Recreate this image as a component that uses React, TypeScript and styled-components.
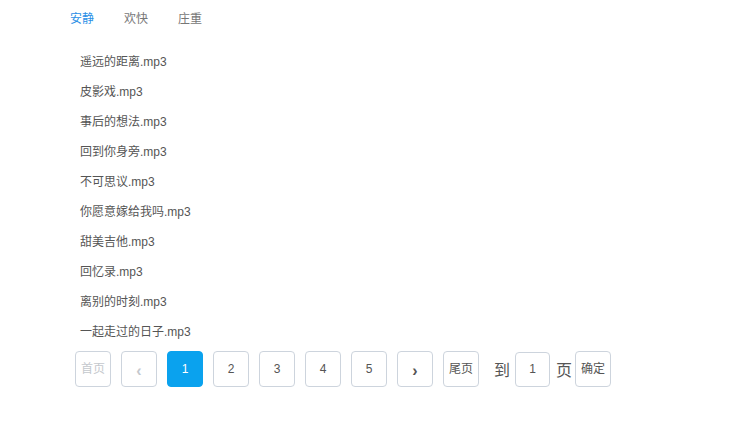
import React from "react";
import styled, { createGlobalStyle } from "styled-components";

const Global = createGlobalStyle`
  html, body { margin: 0; padding: 0; background: #fff; }
  body { font-family: "Liberation Sans", "Noto Sans CJK SC", sans-serif; }
`;

const Page = styled.div`
  width: 730px;
  height: 425px;
`;

const Tabs = styled.div`
  display: flex;
  height: 34px;
  align-items: center;
  padding-left: 70px;
  gap: 30px;
`;

const Tab = styled.span<{ $active?: boolean }>`
  font-size: 12px;
  color: ${(p) => (p.$active ? "#2b8fe6" : "#777")};
  cursor: pointer;
`;

const List = styled.ul`
  list-style: none;
  margin: 13px 0 0;
  padding: 0 0 0 80px;
`;

const Item = styled.li`
  height: 30px;
  line-height: 30px;
  font-size: 12px;
  color: #555;
`;

const Pager = styled.div`
  display: flex;
  align-items: center;
  margin-top: 4px;
  padding-left: 75px;
`;

const PageBtn = styled.div<{ $active?: boolean; $disabled?: boolean; $arrow?: boolean }>`
  box-sizing: border-box;
  width: 36px;
  height: 36px;
  margin-right: 10px;
  border: 1px solid ${(p) => (p.$active ? "#0aa2ee" : "#cdd4dd")};
  border-radius: 4px;
  background: ${(p) => (p.$active ? "#0aa2ee" : "#fff")};
  color: ${(p) => (p.$active ? "#fff" : p.$disabled ? "#c4c8cd" : "#555")};
  display: flex;
  align-items: center;
  justify-content: center;
  font-size: ${(p) => (p.$arrow ? "16px" : "12px")};
  font-weight: ${(p) => (p.$arrow ? 700 : 400)};
  padding-top: ${(p) => (p.$arrow ? "4px" : "0")};
  line-height: 1;
`;

const Label = styled.span<{ $before: number; $after: number }>`
  font-size: 16px;
  color: #555;
  margin: 0 ${(p) => p.$after}px 0 ${(p) => p.$before}px;
`;

const Input = styled.div`
  box-sizing: border-box;
  width: 35px;
  height: 35px;
  border: 1px solid #cdd4dd;
  border-radius: 4px;
  display: flex;
  align-items: center;
  justify-content: center;
  font-size: 12px;
  color: #555;
`;

const songs = [
  "遥远的距离.mp3",
  "皮影戏.mp3",
  "事后的想法.mp3",
  "回到你身旁.mp3",
  "不可思议.mp3",
  "你愿意嫁给我吗.mp3",
  "甜美吉他.mp3",
  "回忆录.mp3",
  "离别的时刻.mp3",
  "一起走过的日子.mp3",
];

export default function App() {
  return (
    <Page>
      <Global />
      <Tabs>
        <Tab $active>安静</Tab>
        <Tab>欢快</Tab>
        <Tab>庄重</Tab>
      </Tabs>
      <List>
        {songs.map((s) => (
          <Item key={s}>{s}</Item>
        ))}
      </List>
      <Pager>
        <PageBtn $disabled>首页</PageBtn>
        <PageBtn $disabled $arrow>‹</PageBtn>
        <PageBtn $active>1</PageBtn>
        <PageBtn>2</PageBtn>
        <PageBtn>3</PageBtn>
        <PageBtn>4</PageBtn>
        <PageBtn>5</PageBtn>
        <PageBtn $arrow>›</PageBtn>
        <PageBtn>尾页</PageBtn>
        <Label $before={5} $after={5}>到</Label>
        <Input>1</Input>
        <Label $before={6} $after={3}>页</Label>
        <PageBtn>确定</PageBtn>
      </Pager>
    </Page>
  );
}
